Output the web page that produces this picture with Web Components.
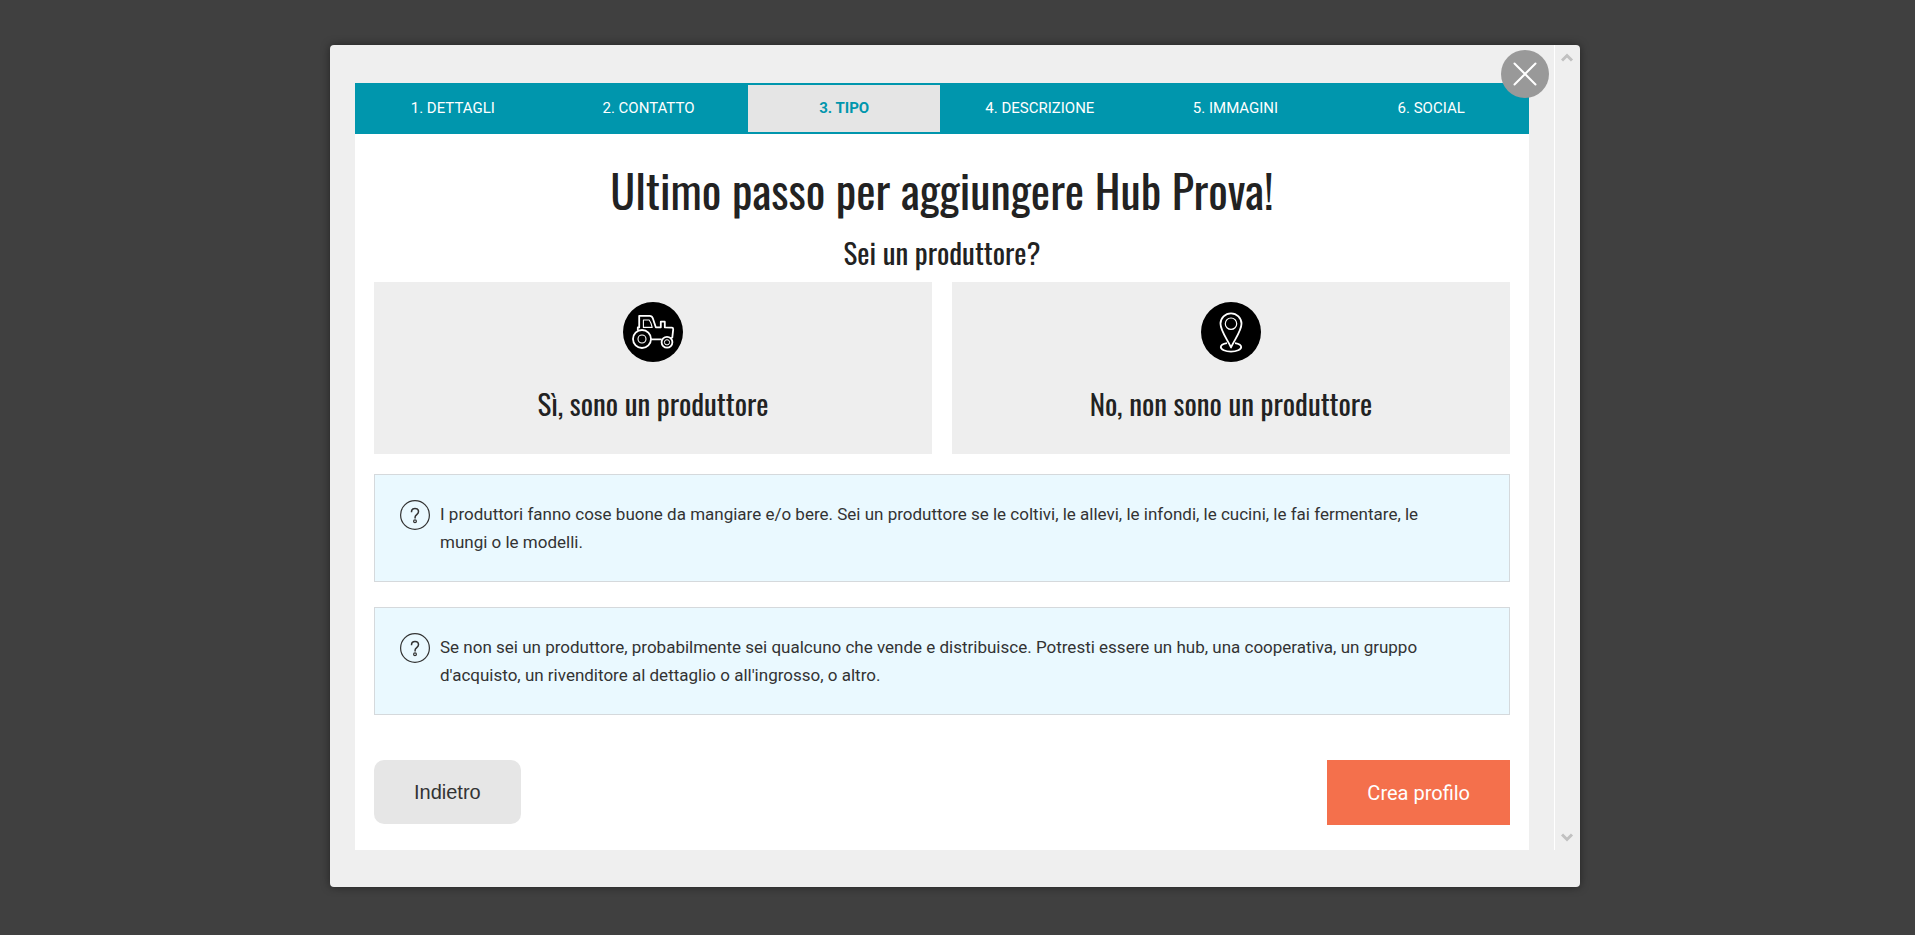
<!DOCTYPE html>
<html lang="it">
<head>
<meta charset="utf-8">
<meta name="viewport" content="width=device-width, initial-scale=1">
<title>Registrazione profilo</title>
<style>
  body { margin: 0; background: #404040; color: #333; font-family: Roboto, "Liberation Sans", sans-serif; }
</style>
</head>
<body>
<modal-window>
  <step-nav slot="nav" current="3"></step-nav>
  <type-step></type-step>
</modal-window>

<script>
const define = (name, html, setup) => {
  const template = document.createElement('template');
  template.innerHTML = html;
  customElements.define(name, class extends HTMLElement {
    constructor() {
      super();
      this.attachShadow({ mode: 'open' }).append(template.content.cloneNode(true));
    }
    connectedCallback() { if (setup) setup(this, this.shadowRoot); }
  });
};

define('modal-window', `
  <style>
    :host { display: flex; justify-content: center; box-sizing: border-box; min-height: 100vh; align-items: flex-start; padding: 45px 5px 48px 0; }
    .window { position: relative; box-sizing: border-box; width: 100%; max-width: 1250px; padding-bottom: 37px;
      background: #efefef; border-radius: 4px; box-shadow: 0 0 10px rgba(0, 0, 0, .45); }
    .scroller { display: grid; grid-template-columns: minmax(0, 1fr) 26px; }
    main { padding: 38px 25px 0; }
    .panel { background: #fff; }
    .close { position: absolute; top: 5px; right: 31px; width: 48px; height: 48px; padding: 0; border: 0; border-radius: 50%;
      background: #999; cursor: pointer; }
    .close svg { display: block; }
  </style>
  <div class="window" role="dialog" aria-modal="true">
    <div class="scroller">
      <main><div class="panel"><slot name="nav"></slot><slot></slot></div></main>
      <scroll-rail></scroll-rail>
    </div>
    <button class="close" type="button" aria-label="Chiudi">
      <svg width="48" height="48" viewBox="0 0 48 48" fill="none" stroke="#fff" stroke-width="2" stroke-linecap="round"><path d="M13.5 13.5l21 21M34.5 13.5l-21 21"/></svg>
    </button>
  </div>`);

define('scroll-rail', `
  <style>
    :host { display: flex; flex-direction: column; justify-content: space-between; border-left: 1px solid #fff; }
    button { display: block; width: 100%; height: 26px; padding: 0; border: 0; background: none; }
    svg { display: block; margin: 0 auto; }
  </style>
  <button type="button" aria-label="Scorri su"><svg width="14" height="26" viewBox="0 0 14 26" fill="none" stroke="#c1c1c1" stroke-width="3"><path d="M1 15.500l5-5 5 5"/></svg></button>
  <button type="button" aria-label="Scorri giù"><svg width="14" height="26" viewBox="0 0 14 26" fill="none" stroke="#c1c1c1" stroke-width="3"><path d="M1 10.500l5 5 5-5"/></svg></button>`);

define('step-nav', `
  <style>
    :host { display: block; background: #0096ad; }
    nav { display: grid; grid-template-columns: repeat(6, minmax(0, 1fr)); }
    a { padding: 14px 4px; border: 2px solid #0096ad; color: #fff; font-size: 15px; line-height: 19px; text-align: center;
      text-decoration: none; text-transform: uppercase; }
    a[aria-current] { background: #e5e5e5; color: #0096ad; font-weight: 700; }
  </style>
  <nav aria-label="Passi"></nav>`,
  (host, root) => {
    const nav = root.querySelector('nav');
    nav.replaceChildren(...['Dettagli', 'Contatto', 'Tipo', 'Descrizione', 'Immagini', 'Social'].map((label, i) => {
      const a = document.createElement('a');
      a.href = '#' + label.toLowerCase();
      a.textContent = (i + 1) + '. ' + label;
      if (String(i + 1) === host.getAttribute('current')) a.setAttribute('aria-current', 'step');
      return a;
    }));
  });

define('choice-card', `
  <style>
    :host { display: block; }
    button { display: flex; flex-direction: column; align-items: center; gap: 21px; width: 100%; padding: 20px 20px 31px;
      border: 0; background: #eee; color: #222; font: 400 29px/40px Oswald, "Roboto Condensed", sans-serif; cursor: pointer; }
    ::slotted(svg) { display: block; }
  </style>
  <button type="button"><slot name="icon"></slot><span><slot></slot></span></button>`);

define('info-box', `
  <style>
    :host { display: flex; align-items: flex-start; gap: 10px; padding: 25px; border: 1px solid #d5d9dc; background: #eaf9ff; }
    svg { flex: none; }
    p { margin: 0; padding-right: 25px; font-size: 17px; line-height: 28px; }
  </style>
  <svg width="30" height="30" viewBox="0 0 30 30" fill="none" stroke="#333" stroke-width="1.2" aria-hidden="true">
    <circle cx="15" cy="15" r="14.4"/>
    <path stroke-width="1.5" d="M11.500 12.300V11.900c0-2 1.500-3.300 3.500-3.300s3.500 1.300 3.500 3.200c0 2.600-3.400 2.900-3.400 5.300v1.300"/>
    <circle cx="15" cy="21.300" r="1.400" stroke-width="1.200"/>
  </svg>
  <p><slot></slot></p>`);

define('type-step', `
  <style>
    :host { display: block; padding: 23px 19px 25px; }
    h1, h2 { margin: 0; color: #222; font-family: Oswald, "Roboto Condensed", sans-serif; font-weight: 400; text-align: center; }
    h1 { font-size: 46px; line-height: 64px; }
    h2 { margin-top: 11px; font-size: 29px; line-height: 40px; }
    .choices { display: grid; grid-template-columns: 1fr 1fr; gap: 20px; margin: 10px 0 20px; }
    .notes { display: grid; gap: 25px; margin-bottom: 45px; }
    .actions { display: flex; justify-content: space-between; align-items: flex-start; }
    .actions button { padding: 0 40px; border: 0; font-size: 20px; cursor: pointer; }
    .back { height: 64px; border-radius: 10px; background: #e6e6e6; color: #333; font-family: "Liberation Sans", Arial, sans-serif; }
    .create { height: 65px; background: #f4704c; color: #fff; font-family: Roboto, sans-serif; }
  </style>
  <h1>Ultimo passo per aggiungere Hub Prova!</h1>
  <h2>Sei un produttore?</h2>
  <div class="choices">
    <choice-card>
      <svg slot="icon" width="60" height="60" viewBox="0 0 60 60" fill="none" stroke="#fff" stroke-width="1.8" stroke-linejoin="round" aria-hidden="true">
        <circle cx="30" cy="30" r="30" fill="#000" stroke="none"/>
        <circle cx="19" cy="37" r="9"/><circle cx="19" cy="37" r="4" stroke-width="1.1"/>
        <circle cx="44" cy="40.3" r="5.4"/><circle cx="44" cy="40.3" r="2.6" stroke-width="1"/>
        <path d="M14.8 28.6v-3.2h1.4V13.8h10.5c2 0 2.6 1 3.1 2.5l3 9h5v-5.6h4v5.6l7.2.4c1 .1 1.3.6 1.2 1.6l-.9 8.2-1.8 1M28 37.3h10.7"/>
        <path d="M20.4 18h5.8c1.4 1.8 2.5 4.6 3 7.4h-8.8z" stroke-width="1.1"/>
      </svg>Sì, sono un produttore</choice-card>
    <choice-card>
      <svg slot="icon" width="60" height="60" viewBox="0 0 60 60" fill="none" stroke="#fff" stroke-width="1.8" stroke-linejoin="round" aria-hidden="true">
        <circle cx="30" cy="30" r="30" fill="#000" stroke="none"/>
        <path d="M26 41.2c-3.600.6-6.200 2.100-6.200 3.900 0 2.500 4.600 4.500 10.200 4.500s10.200-2 10.200-4.500c0-1.800-2.600-3.300-6.200-3.900"/>
        <path d="M30 45.5C27 38.5 19.5 29 19.5 21.8a10.500 10.500 0 0 1 21 0C40.500 29 33 38.500 30 45.500z"/>
        <circle cx="30" cy="21.7" r="5.7" stroke-width="1.2"/>
      </svg>No, non sono un produttore</choice-card>
  </div>
  <div class="notes">
    <info-box>I produttori fanno cose buone da mangiare e/o bere. Sei un produttore se le coltivi, le allevi, le infondi, le cucini, le fai fermentare, le mungi o le modelli.</info-box>
    <info-box>Se non sei un produttore, probabilmente sei qualcuno che vende e distribuisce. Potresti essere un hub, una cooperativa, un gruppo d'acquisto, un rivenditore al dettaglio o all'ingrosso, o altro.</info-box>
  </div>
  <div class="actions">
    <button class="back" type="button">Indietro</button>
    <button class="create" type="button">Crea profilo</button>
  </div>`);
</script>
</body>
</html>
